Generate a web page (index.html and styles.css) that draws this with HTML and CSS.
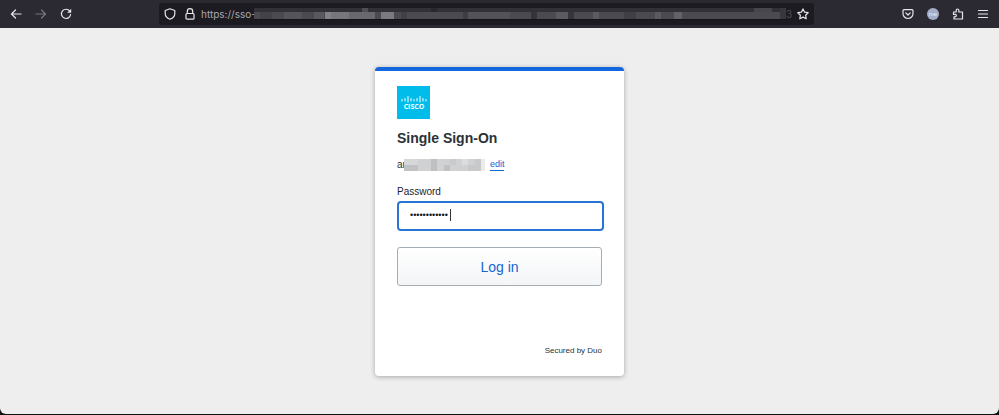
FILE: index.html
```
<!DOCTYPE html>
<html lang="en">
<head>
  <meta charset="UTF-8" />
  <meta name="viewport" content="width=device-width, initial-scale=1.0"/>
  <title>Single Sign-On</title>
  <link rel="stylesheet" href="styles.css">
</head>
<body>

  <header class="toolbar">
    <div class="nav">
      <button aria-label="Back"><svg viewBox="0 0 12 12"><path d="M11 6H1.500M5.500 2 1.500 6l4 4"/></svg></button>
      <button class="disabled" aria-label="Forward"><svg viewBox="0 0 12 12"><path d="M1 6h9.500M6.500 2l4 4-4 4"/></svg></button>
      <button aria-label="Reload"><svg viewBox="0 0 12 12"><path d="M9.800 3.200A4.600 4.600 0 1 0 10.600 6.500"/><path class="solid" d="M11.200.8v4H7.200z"/></svg></button>
    </div>

    <div class="urlbar">
      <svg viewBox="0 0 12 12"><path d="M6 .8 10.800 2.500V5.500c0 2.800-1.900 4.700-4.800 5.800C3.100 10.200 1.200 8.300 1.200 5.500v-3z"/></svg>
      <svg viewBox="0 0 12 12"><path d="M3.300 5.500V3.400a2.700 2.700 0 0 1 5.400 0v2.100"/><rect x="2" y="5.500" width="8" height="5.700" rx="1"/></svg>
      <input class="address" type="text" value="https://sso-" aria-label="Address">
      <svg class="mosaic" viewBox="0 0 532 12" preserveAspectRatio="none" aria-hidden="true">
        <rect width="532" height="12" fill="#323138"/>
        <rect y="4" width="532" height="7" fill="#4b4a50"/>
        <rect y="11" width="532" height="1" fill="#14131a"/>
        <rect x="6" y="4" width="12" height="7" fill="#434248"/>
        <rect x="30" y="4" width="18" height="7" fill="#55545a"/>
        <rect x="60" y="4" width="10" height="7" fill="#59585e"/>
        <rect x="71" y="4" width="6" height="7" fill="#828186"/>
        <rect x="77" y="4" width="18" height="7" fill="#77767b"/>
        <rect x="95" y="4" width="26" height="7" fill="#69686e"/>
        <rect x="108" y="0" width="6" height="4" fill="#504f55"/>
        <rect x="127" y="4" width="13" height="7" fill="#7b7a80"/>
        <rect x="147" y="4" width="6" height="7" fill="#414046"/>
        <rect x="177" y="0" width="6" height="4" fill="#29282f"/>
        <rect x="209" y="4" width="5" height="7" fill="#3e3d43"/>
        <rect x="214" y="4" width="42" height="7" fill="#535258"/>
        <rect x="277" y="4" width="6" height="7" fill="#35343a"/>
        <rect x="302" y="4" width="12" height="7" fill="#5b5a60"/>
        <rect x="314" y="4" width="6" height="7" fill="#36353b"/>
        <rect x="339" y="4" width="6" height="7" fill="#5c5b61"/>
        <rect x="370" y="4" width="12" height="7" fill="#403f45"/>
        <rect x="401" y="4" width="6" height="7" fill="#5b5a60"/>
        <rect x="420" y="4" width="8" height="7" fill="#636268"/>
        <rect x="500" y="0" width="18" height="4" fill="#47464c"/>
        <rect x="526" y="0" width="6" height="11" fill="#38373d"/>
      </svg>
      <span class="url-end">3</span>
      <button class="star" aria-label="Bookmark this page"><svg viewBox="0 0 12 12"><path d="m6 .9 1.600 3.300 3.600.5-2.600 2.500.6 3.600L6 9.100l-3.200 1.700.6-3.600L.8 4.700l3.600-.5z"/></svg></button>
    </div>

    <div class="tools">
      <button aria-label="Save to Pocket"><svg viewBox="0 0 12 12"><path d="M2 1.700h8a1 1 0 0 1 1 1V5.500a5 5 0 0 1-10 0V2.700a1 1 0 0 1 1-1z"/><path d="M3.800 4.900 6 7l2.200-2.100"/></svg></button>
      <button class="avatar" aria-label="Account">me</button>
      <button aria-label="Extensions"><svg viewBox="0 0 12 12"><path d="M1.500 4h2.700V2.300a1.300 1.300 0 0 1 2.600 0V4h3.700v7h-8.500V8.800h1.200a1.200 1.200 0 0 0 0-2.400H1.500z"/></svg></button>
      <button aria-label="Menu"><svg viewBox="0 0 12 12"><path d="M1.500 2.500h9M1.500 6h9M1.500 9.500h9"/></svg></button>
    </div>
  </header>

  <main class="page">
    <form class="card">
      <svg class="logo" viewBox="0 0 33 33" role="img" aria-label="Cisco">
        <rect width="33" height="33" fill="#00bceb"/>
        <path d="M5 13.500v1.500M8 12.500V15M11 10.500v5.500M14 12.500V15M17 13.500v1.500M20 12.500V15M23 10.500v5.500M26 12.500V15M29 13.500v1.500" stroke="#fff" stroke-width="1" stroke-linecap="round"/>
        <text class="logo-text" x="17" y="23" text-anchor="middle">CISCO</text>
      </svg>

      <h1>Single Sign-On</h1>

      <div class="account">
        <span>ar</span>
        <svg class="redacted" viewBox="0 0 81 12" aria-hidden="true">
          <rect width="81" height="12" fill="#d0d1d2"/>
          <rect y="0" width="14" height="6" fill="#d6d7d8"/>
          <rect y="6" width="14" height="6" fill="#c1c2c4"/>
          <rect x="27" width="6" height="12" fill="#bfc0c1"/>
          <rect x="33" width="7" height="12" fill="#d1d2d3"/>
          <rect x="40" y="6" width="6" height="6" fill="#c0c1c3"/>
          <rect x="46" width="6" height="6" fill="#c9cacb"/>
          <rect x="58" width="6" height="6" fill="#dbdcdc"/>
          <rect x="64" y="6" width="7" height="6" fill="#c7c8ca"/>
          <rect x="71" width="6" height="12" fill="#c8c9cb"/>
          <rect x="77" width="4" height="12" fill="#ebebea"/>
        </svg>
        <a href="#">edit</a>
      </div>

      <label for="password">Password</label>
      <div class="field">
        <input id="password" type="password" value="abcdefghijkl">
        <span class="caret"></span>
      </div>

      <button class="login" type="submit">Log in</button>

      <p class="secured">Secured by Duo</p>
    </form>
  </main>

</body>
</html>
```

FILE: styles.css
```
* {
  box-sizing: border-box;
}
html {
  background: #111;
}
body {
  margin: 0;
  min-height: 100vh;
  display: flex;
  flex-direction: column;
  font-family: "Liberation Sans", Arial, sans-serif;
  color: #2b3238;
}
button {
  padding: 0;
  border: none;
  background: none;
  font-family: inherit;
  cursor: pointer;
}

/* browser toolbar */
.toolbar {
  height: 28px;
  padding: 0 10px;
  display: grid;
  grid-template-columns: 149px 1fr 175px;
  align-items: center;
  background: #2b2a33;
}
.toolbar svg {
  display: block;
  width: 12px;
  height: 12px;
  flex: none;
  fill: none;
  stroke: #e6e6ea;
  stroke-width: 1.2;
  stroke-linecap: round;
  stroke-linejoin: round;
}
.toolbar .solid {
  fill: #e6e6ea;
  stroke: none;
}
.nav {
  display: flex;
  gap: 13px;
}
.nav .disabled {
  opacity: 0.4;
}
.urlbar {
  height: 22px;
  padding: 0 5px;
  display: flex;
  align-items: center;
  background: #1c1b22;
  border-radius: 3px;
}
.urlbar > svg:nth-child(2) {
  margin-left: 8px;
}
.address {
  width: 53px;
  margin-left: 5px;
  padding: 0;
  border: none;
  background: none;
  color: #a9a9b0;
  font: 10px Inter, sans-serif;
}
.toolbar .mosaic {
  flex: 1;
  min-width: 0;
  stroke: none;
}
.url-end {
  width: 6px;
  color: #4d4c53;
  font: 10px Inter, sans-serif;
}
.star {
  margin-left: 5px;
}
.tools {
  display: flex;
  justify-content: flex-end;
  align-items: center;
  gap: 13px;
}
.avatar {
  width: 12px;
  height: 12px;
  border-radius: 50%;
  background: #a5aec8;
  color: #e8ebf4;
  font-size: 6px;
  line-height: 12px;
}

/* login page */
.page {
  flex: 1;
  margin-bottom: 1px;
  padding: 39px 16px 38px;
  display: flex;
  justify-content: center;
  align-items: flex-start;
  background: #eee;
  border-radius: 0 0 6px 6px;
}
.card {
  width: 100%;
  max-width: 249px;
  padding: 15px 22px 19px;
  display: flex;
  flex-direction: column;
  background: #fff;
  border-top: 4px solid #1467dc;
  border-radius: 4px;
  box-shadow: 0 1px 5px rgba(0, 0, 0, 0.3);
}
.logo {
  width: 33px;
  height: 33px;
}
.logo-text {
  fill: #fff;
  font: bold 7px "Open Sans", sans-serif;
}
h1 {
  margin: 10px 0 11px;
  font-size: 14px;
  line-height: 18px;
}
.account {
  display: flex;
  align-items: center;
  font-size: 10px;
  line-height: 12px;
}
/* the mosaic lies over the end of the name */
.redacted {
  width: 81px;
  height: 12px;
  margin-left: -2px;
}
.account a {
  margin-left: 5px;
  color: #1565d0;
  font-size: 9px;
  text-decoration: none;
  border-bottom: 1px solid #1565d0;
}
label {
  margin-top: 14px;
  color: #1d2329;
  font-size: 10px;
  line-height: 14px;
}
.field {
  position: relative;
  margin: 2px -2px 16px 0;
}
.field input {
  display: block;
  width: 100%;
  height: 30px;
  padding: 0 11px 2px;
  border: 2px solid #2875d6;
  border-radius: 4px;
  outline: none;
  background: #fff;
  color: #14181c;
  font: 9px "Liberation Sans", Arial, sans-serif;
}
.caret {
  position: absolute;
  left: 53px;
  top: 8px;
  width: 1px;
  height: 12px;
  background: #333;
}
.login {
  height: 39px;
  border: 1px solid #a5adb4;
  border-radius: 3px;
  background: linear-gradient(#fff, #f3f5f7);
  color: #1565d0;
  font-size: 14px;
}
.secured {
  margin: 59px 0 0;
  font-size: 8px;
  line-height: 12px;
  text-align: right;
}
```
